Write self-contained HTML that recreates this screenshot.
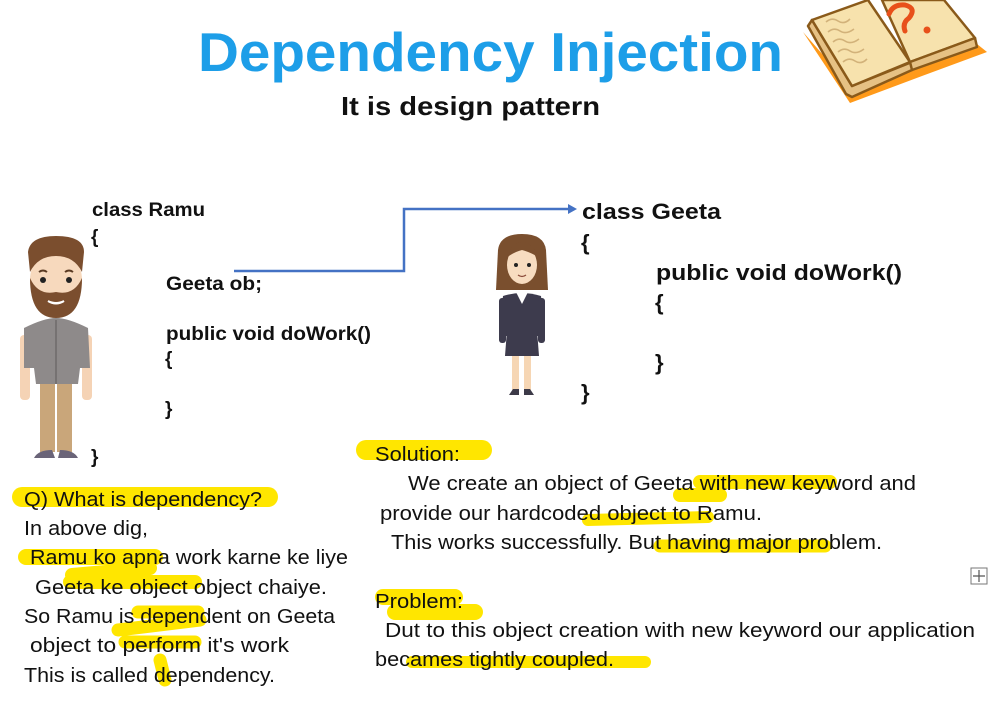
<!DOCTYPE html>
<html><head><meta charset="utf-8"><style>
html,body{margin:0;padding:0;background:#fff;width:988px;height:705px;overflow:hidden}
svg{display:block}
.c{font-family:"Liberation Sans",Arial,sans-serif;font-weight:bold;fill:#111}
.t{font-family:"Liberation Sans",Arial,sans-serif;fill:#111;font-size:20px}
.h{stroke:#ffe600;fill:none;stroke-linecap:round;stroke-linejoin:round}
</style></head><body>
<svg width="988" height="705" viewBox="0 0 988 705" xmlns="http://www.w3.org/2000/svg">
<text x="198" y="71" class="c" style="fill:#1d9ee8;font-size:55px" textLength="585" lengthAdjust="spacingAndGlyphs">Dependency Injection</text>
<text x="341" y="115" class="c" style="font-size:26px" textLength="259" lengthAdjust="spacingAndGlyphs">It is design pattern</text>

<!-- book -->
<g stroke-linejoin="round">
<path d="M803 32 L850 103 L922 76 L987 52 L972 40 L910 62 L852 88 Z" fill="#ff9a1a"/>
<path d="M808 26 L846 94 L852 97 L912 70 L912 62 L852 86 L812 20 Z" fill="#e6c184" stroke="#8a5a1a" stroke-width="2.5"/>
<path d="M812 20 L868 0 L910 62 L852 86 Z" fill="#f7e2ad" stroke="#8a5a1a" stroke-width="2.5"/>
<path d="M882 0 L944 0 L975 38 L910 62 Z" fill="#f7e2ad" stroke="#8a5a1a" stroke-width="2.5"/>
<path d="M910 62 L975 38 L977 47 L912 70 Z" fill="#e6c184" stroke="#8a5a1a" stroke-width="2.5"/>
<path d="M826 22 q6 -5 12 -1 t12 -2 M828 32 q6 -5 12 -1 t14 -2 M833 42 q6 -5 12 -1 t14 -2 M838 52 q6 -5 12 -1 t14 -2 M843 62 q6 -5 12 -1 t12 -2" stroke="#d2b27a" stroke-width="1.6" fill="none"/>
<path d="M889 14 q4 -10 16 -9 q12 3 4 13 q-7 5 -4 13" stroke="#e8501a" stroke-width="5" fill="none" stroke-linecap="round"/>
<circle cx="927" cy="30" r="3.5" fill="#e8501a"/>
</g>

<path d="M234 271 H404 V209 H570" stroke="#4472c4" stroke-width="2.5" fill="none"/>
<path d="M568 204 L577 209 L568 214 Z" fill="#4472c4"/>

<text x="92" y="216" class="c" style="font-size:19px" textLength="113" lengthAdjust="spacingAndGlyphs">class Ramu</text>
<text x="91" y="243" class="c" style="font-size:19px">{</text>
<text x="166" y="290" class="c" style="font-size:19px" textLength="96" lengthAdjust="spacingAndGlyphs">Geeta ob;</text>
<text x="166" y="340" class="c" style="font-size:19px" textLength="205" lengthAdjust="spacingAndGlyphs">public void doWork()</text>
<text x="165" y="365" class="c" style="font-size:19px">{</text>
<text x="165" y="415" class="c" style="font-size:19px">}</text>
<text x="91" y="463" class="c" style="font-size:19px">}</text>

<text x="582" y="219" class="c" style="font-size:22px" textLength="139" lengthAdjust="spacingAndGlyphs">class Geeta</text>
<text x="581" y="250" class="c" style="font-size:22px">{</text>
<text x="656" y="280" class="c" style="font-size:22px" textLength="246" lengthAdjust="spacingAndGlyphs">public void doWork()</text>
<text x="655" y="310" class="c" style="font-size:22px">{</text>
<text x="655" y="370" class="c" style="font-size:22px">}</text>
<text x="581" y="400" class="c" style="font-size:22px">}</text>

<g>
<rect x="40" y="380" width="15" height="72" fill="#c9a67a"/>
<rect x="57" y="380" width="15" height="72" fill="#c9a67a"/>
<path d="M34 458 q4 -8 18 -8 l3 8 Z M58 458 l2 -8 q14 0 18 8 Z" fill="#6a6478"/>
<rect x="20" y="335" width="10" height="65" rx="4" fill="#f5d3b5"/>
<rect x="82" y="335" width="10" height="65" rx="4" fill="#f5d3b5"/>
<path d="M24 328 q20 -10 32 -10 q12 0 32 10 l2 40 l-10 0 l-2 16 H36 l-2 -16 l-10 0 Z" fill="#8e8a8a"/>
<line x1="56" y1="320" x2="56" y2="384" stroke="#6e6a6a" stroke-width="1.5"/>
<ellipse cx="56" cy="280" rx="26" ry="32" fill="#f7d9bd"/>
<path d="M28 252 q2 -16 28 -16 q28 0 28 16 l-2 20 q-8 -16 -26 -16 q-18 0 -26 16 Z" fill="#7b4e2e"/>
<path d="M30 278 q0 40 26 40 q26 0 26 -40 q-8 18 -26 14 q-18 4 -26 -14 Z" fill="#7b4e2e"/>
<path d="M48 301 q8 5 16 0 q-8 4 -16 0" fill="#fff" stroke="#fff" stroke-width="2"/>
<circle cx="43" cy="280" r="3" fill="#222"/><circle cx="69" cy="280" r="3" fill="#222"/>
<path d="M39 272 q4 -3 8 0 M65 272 q4 -3 8 0" stroke="#5a3a22" stroke-width="2" fill="none"/>
</g>

<g>
<rect x="512" y="348" width="7" height="42" fill="#f6d6b4"/>
<rect x="524" y="348" width="7" height="42" fill="#f6d6b4"/>
<path d="M509 395 l4 -6 h6 v6 Z M524 395 v-6 h6 l4 6 Z" fill="#3c3a48"/>
<path d="M498 250 q2 -16 24 -16 q22 0 24 16 l2 40 h-52 Z" fill="#7a4f2e"/>
<ellipse cx="522" cy="265" rx="15" ry="19" fill="#f7dcc0"/>
<path d="M506 258 q6 -16 16 -16 q10 0 18 16 q-10 -6 -18 -8 q-8 2 -16 8 Z" fill="#7a4f2e"/>
<circle cx="516" cy="265" r="2" fill="#222"/><circle cx="529" cy="265" r="2" fill="#222"/>
<path d="M518 275 q4 3 8 0" stroke="#8a4a3a" stroke-width="1.2" fill="none"/>
<path d="M503 296 q19 -6 38 0 l4 40 h-46 Z" fill="#3d3b4d"/>
<rect x="499" y="298" width="7" height="45" rx="3" fill="#3d3b4d"/>
<rect x="538" y="298" width="7" height="45" rx="3" fill="#3d3b4d"/>
<path d="M507 330 h30 l2 26 h-34 Z" fill="#3d3b4d"/>
<path d="M516 292 l6 12 l6 -12 Z" fill="#fff"/>
</g>

<g class="h">
<path d="M22 497 H268" stroke-width="20"/>
<path d="M26 557 H155" stroke-width="16"/>
<path d="M72 575 L150 568 M70 582 H195" stroke-width="14"/>
<path d="M138 612 H198 M118 630 L200 620 M125 642 H195 M160 660 L165 680" stroke-width="13"/>
<path d="M366 450 H482" stroke-width="20"/>
<path d="M700 482 H830 M680 495 H720" stroke-width="14"/>
<path d="M588 520 L708 517" stroke-width="12"/>
<path d="M660 546 H825" stroke-width="13"/>
<path d="M383 597 H455 M395 612 H475" stroke-width="16"/>
<path d="M412 662 H645" stroke-width="12"/>
</g>

<text class="t" x="24" y="506" textLength="238" lengthAdjust="spacingAndGlyphs">Q) What is dependency?</text>
<text class="t" x="24" y="535" textLength="124" lengthAdjust="spacingAndGlyphs">In above dig,</text>
<text class="t" x="30" y="564" textLength="318" lengthAdjust="spacingAndGlyphs">Ramu ko apna work karne ke liye</text>
<text class="t" x="35" y="594" textLength="292" lengthAdjust="spacingAndGlyphs">Geeta ke object object chaiye.</text>
<text class="t" x="24" y="623" textLength="311" lengthAdjust="spacingAndGlyphs">So Ramu is dependent on Geeta</text>
<text class="t" x="30" y="652" textLength="259" lengthAdjust="spacingAndGlyphs">object to perform it's work</text>
<text class="t" x="24" y="682" textLength="251" lengthAdjust="spacingAndGlyphs">This is called dependency.</text>

<text class="t" x="375" y="461" textLength="85" lengthAdjust="spacingAndGlyphs">Solution:</text>
<text class="t" x="408" y="490" textLength="508" lengthAdjust="spacingAndGlyphs">We create an object of Geeta with new keyword and</text>
<text class="t" x="380" y="520" textLength="382" lengthAdjust="spacingAndGlyphs">provide our hardcoded object to Ramu.</text>
<text class="t" x="391" y="549" textLength="491" lengthAdjust="spacingAndGlyphs">This works successfully. But having major problem.</text>
<text class="t" x="375" y="608" textLength="88" lengthAdjust="spacingAndGlyphs">Problem:</text>
<text class="t" x="385" y="637" textLength="590" lengthAdjust="spacingAndGlyphs">Dut to this object creation with new keyword our application</text>
<text class="t" x="375" y="666" textLength="239" lengthAdjust="spacingAndGlyphs">becames tightly coupled.</text>

<rect x="971" y="568" width="16" height="16" fill="#fff" stroke="#777"/>
<path d="M979 570 V582 M973 576 H985" stroke="#555" stroke-width="1.2"/>
</svg>
</body></html>
